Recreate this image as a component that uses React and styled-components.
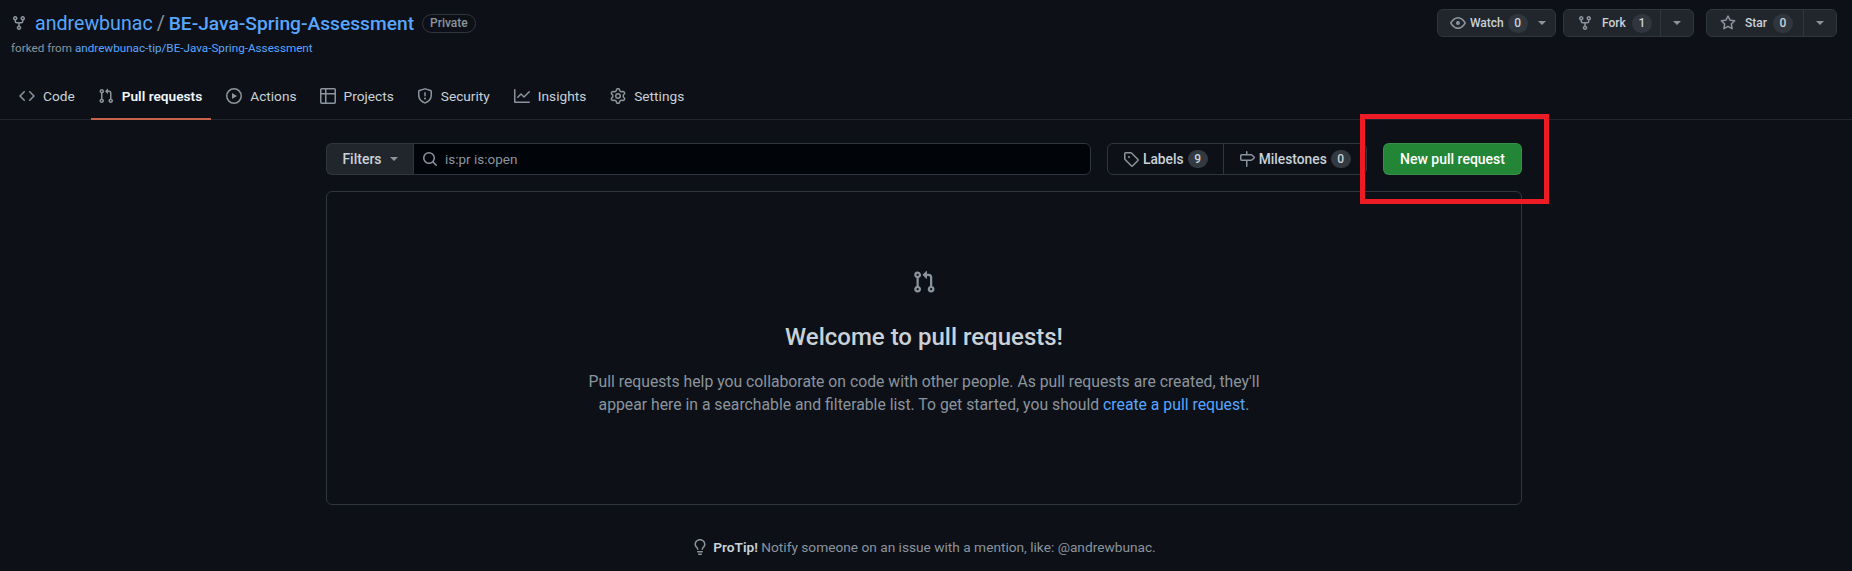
import React from 'react';
import styled, { createGlobalStyle } from 'styled-components';

const paths = {
  fork: 'M5 5.372v.878c0 .414.336.75.75.75h4.5a.75.75 0 0 0 .75-.75v-.878a2.25 2.25 0 1 1 1.5 0v.878a2.25 2.25 0 0 1-2.25 2.25h-1.5v2.128a2.251 2.251 0 1 1-1.5 0V8.5h-1.5A2.25 2.25 0 0 1 3.5 6.25v-.878a2.25 2.25 0 1 1 1.5 0ZM5 3.25a.75.75 0 1 0-1.5 0 .75.75 0 0 0 1.5 0Zm6.75.75a.75.75 0 1 0 0-1.5.75.75 0 0 0 0 1.5Zm-3 8.75a.75.75 0 1 0-1.5 0 .75.75 0 0 0 1.5 0Z',
  code: 'm11.28 3.22 4.25 4.25a.75.75 0 0 1 0 1.06l-4.25 4.25a.749.749 0 0 1-1.275-.326.749.749 0 0 1 .215-.734L13.94 8l-3.72-3.72a.749.749 0 0 1 .326-1.275.749.749 0 0 1 .734.215Zm-6.56 0a.751.751 0 0 1 1.042.018.751.751 0 0 1 .018 1.042L2.06 8l3.72 3.72a.749.749 0 0 1-.326 1.275.749.749 0 0 1-.734-.215L.47 8.53a.75.75 0 0 1 0-1.06Z',
  pr: 'M1.5 3.25a2.25 2.25 0 1 1 3 2.122v5.256a2.251 2.251 0 1 1-1.5 0V5.372A2.25 2.25 0 0 1 1.5 3.25Zm5.677-.177L9.573.677A.25.25 0 0 1 10 .854V2.5h1A2.5 2.5 0 0 1 13.5 5v5.628a2.251 2.251 0 1 1-1.5 0V5a1 1 0 0 0-1-1h-1v1.646a.25.25 0 0 1-.427.177L7.177 3.427a.25.25 0 0 1 0-.354ZM3.75 2.5a.75.75 0 1 0 0 1.5.75.75 0 0 0 0-1.5Zm0 9.5a.75.75 0 1 0 0 1.5.75.75 0 0 0 0-1.5Zm8.25.75a.75.75 0 1 0 1.5 0 .75.75 0 0 0-1.5 0Z',
  play: 'M8 0a8 8 0 1 1 0 16A8 8 0 0 1 8 0ZM1.5 8a6.5 6.5 0 1 0 13 0 6.5 6.5 0 0 0-13 0Zm4.879-2.773 4.264 2.559a.25.25 0 0 1 0 .428l-4.264 2.559A.25.25 0 0 1 6 10.559V5.442a.25.25 0 0 1 .379-.215Z',
  table: 'M0 1.75C0 .784.784 0 1.75 0h12.5C15.216 0 16 .784 16 1.75v12.5A1.75 1.75 0 0 1 14.25 16H1.75A1.75 1.75 0 0 1 0 14.25ZM6.5 6.5v8h7.75a.25.25 0 0 0 .25-.25V6.5Zm8-1.5V1.75a.25.25 0 0 0-.25-.25H6.5V5Zm-13 1.5v7.75c0 .138.112.25.25.25H5v-8ZM5 5V1.5H1.75a.25.25 0 0 0-.25.25V5Z',
  shield: 'M7.467.133a1.748 1.748 0 0 1 1.066 0l5.25 1.68A1.75 1.75 0 0 1 15 3.48V7c0 1.566-.32 3.182-1.303 4.682-.983 1.498-2.585 2.813-5.032 3.855a1.697 1.697 0 0 1-1.33 0c-2.447-1.042-4.049-2.357-5.032-3.855C1.32 10.182 1 8.566 1 7V3.48a1.75 1.75 0 0 1 1.217-1.667Zm.61 1.429a.25.25 0 0 0-.153 0l-5.25 1.68a.25.25 0 0 0-.174.238V7c0 1.358.275 2.666 1.057 3.86.784 1.194 2.121 2.34 4.366 3.297a.196.196 0 0 0 .154 0c2.245-.956 3.582-2.104 4.366-3.298C13.225 9.666 13.5 8.36 13.5 7V3.48a.251.251 0 0 0-.174-.237l-5.25-1.68ZM8.75 4.75v3a.75.75 0 0 1-1.5 0v-3a.75.75 0 0 1 1.5 0ZM9 10.5a1 1 0 1 1-2 0 1 1 0 0 1 2 0Z',
  graph: 'M1.5 1.75V13.5h13.75a.75.75 0 0 1 0 1.5H.75a.75.75 0 0 1-.75-.75V1.75a.75.75 0 0 1 1.5 0Zm14.28 2.53-5.25 5.25a.75.75 0 0 1-1.06 0L7 7.06 4.28 9.78a.751.751 0 0 1-1.042-.018.751.751 0 0 1-.018-1.042l3.25-3.25a.75.75 0 0 1 1.06 0L10 7.94l4.72-4.72a.751.751 0 0 1 1.042.018.751.751 0 0 1 .018 1.042Z',
  gear: 'M8 0a8.2 8.2 0 0 1 .701.031C9.444.095 9.99.645 10.16 1.29l.288 1.107c.018.066.079.158.212.224.231.114.454.243.668.386.123.082.233.09.299.071l1.103-.303c.644-.176 1.392.021 1.82.63.27.385.506.792.704 1.218.315.675.111 1.422-.364 1.891l-.814.806c-.049.048-.098.147-.088.294.016.257.016.515 0 .772-.01.147.038.246.088.294l.814.806c.475.469.679 1.216.364 1.891a7.977 7.977 0 0 1-.704 1.217c-.428.61-1.176.807-1.82.63l-1.102-.302c-.067-.019-.177-.011-.3.071a5.909 5.909 0 0 1-.668.386c-.133.066-.194.158-.211.224l-.29 1.106c-.168.646-.715 1.196-1.458 1.26a8.006 8.006 0 0 1-1.402 0c-.743-.064-1.289-.614-1.458-1.26l-.289-1.106c-.018-.066-.079-.158-.212-.224a5.738 5.738 0 0 1-.668-.386c-.123-.082-.233-.09-.299-.071l-1.103.303c-.644.176-1.392-.021-1.82-.63a8.12 8.12 0 0 1-.704-1.218c-.315-.675-.111-1.422.363-1.891l.815-.806c.05-.048.098-.147.088-.294a6.214 6.214 0 0 1 0-.772c.01-.147-.038-.246-.088-.294l-.815-.806C.635 6.045.431 5.298.746 4.623a7.92 7.92 0 0 1 .704-1.217c.428-.61 1.176-.807 1.82-.63l1.102.302c.067.019.177.011.3-.071.214-.143.437-.272.668-.386.133-.066.194-.158.211-.224l.29-1.106C6.009.645 6.556.095 7.299.03 7.53.01 7.764 0 8 0Zm-.571 1.525c-.036.003-.108.036-.137.146l-.289 1.105c-.147.561-.549.967-.998 1.189-.173.086-.34.183-.5.29-.417.278-.97.423-1.529.27l-1.103-.303c-.109-.03-.175.016-.195.045-.22.312-.412.644-.573.99-.014.031-.021.11.059.19l.815.806c.411.406.562.957.53 1.456a4.709 4.709 0 0 0 0 .582c.032.499-.119 1.05-.53 1.456l-.815.806c-.081.08-.073.159-.059.19.162.346.353.677.573.989.02.03.085.076.195.046l1.102-.303c.56-.153 1.113-.008 1.53.27.161.107.328.204.501.29.447.222.85.629.997 1.189l.289 1.105c.029.109.101.143.137.146a6.6 6.6 0 0 0 1.142 0c.036-.003.108-.036.137-.146l.289-1.105c.147-.561.549-.967.998-1.189.173-.086.34-.183.5-.29.417-.278.97-.423 1.529-.27l1.103.303c.109.029.175-.016.195-.045.22-.313.411-.644.573-.99.014-.031.021-.11-.059-.19l-.815-.806c-.411-.406-.562-.957-.53-1.456a4.709 4.709 0 0 0 0-.582c-.032-.499.119-1.05.53-1.456l.815-.806c.081-.08.073-.159.059-.19a6.464 6.464 0 0 0-.573-.989c-.02-.03-.085-.076-.195-.046l-1.102.303c-.56.153-1.113.008-1.53-.27a4.44 4.44 0 0 0-.501-.29c-.447-.222-.85-.629-.997-1.189l-.289-1.105c-.029-.11-.101-.143-.137-.146a6.6 6.6 0 0 0-1.142 0ZM11 8a3 3 0 1 1-6 0 3 3 0 0 1 6 0ZM9.5 8a1.5 1.5 0 1 0-3.001.001A1.5 1.5 0 0 0 9.5 8Z',
  eye: 'M8 2c1.981 0 3.671.992 4.933 2.078 1.27 1.091 2.187 2.345 2.637 3.023a1.62 1.62 0 0 1 0 1.798c-.45.678-1.367 1.932-2.637 3.023C11.67 13.008 9.981 14 8 14c-1.981 0-3.671-.992-4.933-2.078C1.797 10.83.88 9.576.43 8.898a1.62 1.62 0 0 1 0-1.798c.45-.677 1.367-1.931 2.637-3.022C4.33 2.992 6.019 2 8 2ZM1.679 7.932a.12.12 0 0 0 0 .136c.411.622 1.241 1.75 2.366 2.717C5.176 11.758 6.527 12.5 8 12.5c1.473 0 2.825-.742 3.955-1.715 1.124-.967 1.954-2.096 2.366-2.717a.12.12 0 0 0 0-.136c-.412-.621-1.242-1.75-2.366-2.717C10.824 4.242 9.473 3.5 8 3.5c-1.473 0-2.825.742-3.955 1.715-1.124.967-1.954 2.096-2.366 2.717ZM8 10a2 2 0 1 1-.001-3.999A2 2 0 0 1 8 10Z',
  star: 'M8 .25a.75.75 0 0 1 .673.418l1.882 3.815 4.21.612a.75.75 0 0 1 .416 1.279l-3.046 2.97.719 4.192a.751.751 0 0 1-1.088.791L8 12.347l-3.766 1.98a.75.75 0 0 1-1.088-.79l.72-4.194L.818 6.374a.75.75 0 0 1 .416-1.28l4.21-.611L7.327.668A.75.75 0 0 1 8 .25Zm0 2.445L6.615 5.5a.75.75 0 0 1-.564.41l-3.097.45 2.24 2.184a.75.75 0 0 1 .216.664l-.528 3.084 2.769-1.456a.75.75 0 0 1 .698 0l2.77 1.456-.53-3.084a.75.75 0 0 1 .216-.664l2.24-2.183-3.096-.45a.75.75 0 0 1-.564-.41L8 2.694Z',
  search: 'M10.68 11.74a6 6 0 0 1-7.922-8.982 6 6 0 0 1 8.982 7.922l3.04 3.04a.749.749 0 0 1-.326 1.275.749.749 0 0 1-.734-.215ZM11.5 7a4.499 4.499 0 1 0-8.997 0A4.499 4.499 0 0 0 11.5 7Z',
  tag: 'M1 7.775V2.75C1 1.784 1.784 1 2.75 1h5.025c.464 0 .91.184 1.238.513l6.25 6.25a1.75 1.75 0 0 1 0 2.474l-5.026 5.026a1.75 1.75 0 0 1-2.474 0l-6.25-6.25A1.752 1.752 0 0 1 1 7.775Zm1.5 0c0 .066.026.13.073.177l6.25 6.25a.25.25 0 0 0 .354 0l5.025-5.025a.25.25 0 0 0 0-.354l-6.25-6.25a.25.25 0 0 0-.177-.073H2.75a.25.25 0 0 0-.25.25ZM6 5a1 1 0 1 1 0 2 1 1 0 0 1 0-2Z',
  milestone: 'M7.75 0a.75.75 0 0 1 .75.75V3h3.634c.414 0 .814.147 1.13.414l2.07 1.75a1.75 1.75 0 0 1 0 2.672l-2.07 1.75a1.75 1.75 0 0 1-1.13.414H8.5v5.25a.75.75 0 0 1-1.5 0V10H2.75A1.75 1.75 0 0 1 1 8.25v-3.5C1 3.784 1.784 3 2.75 3H7V.75A.75.75 0 0 1 7.75 0Zm4.384 8.5a.25.25 0 0 0 .161-.06l2.07-1.75a.248.248 0 0 0 0-.38l-2.07-1.75a.25.25 0 0 0-.161-.06H2.75a.25.25 0 0 0-.25.25v3.5c0 .138.112.25.25.25h9.384Z',
  bulb: 'M8 1.5c-2.363 0-4 1.69-4 3.75 0 .984.424 1.625.984 2.304l.214.253c.223.264.47.556.673.848.284.411.537.896.621 1.49a.75.75 0 0 1-1.484.211c-.04-.282-.163-.547-.37-.847a8.456 8.456 0 0 0-.542-.68c-.084-.1-.173-.205-.268-.32C3.201 7.75 2.5 6.766 2.5 5.25 2.5 2.31 4.863 0 8 0s5.5 2.31 5.5 5.25c0 1.516-.701 2.5-1.328 3.259-.095.115-.184.22-.268.319-.207.245-.383.453-.541.681-.208.3-.33.565-.37.847a.751.751 0 0 1-1.485-.212c.084-.593.337-1.078.621-1.489.203-.292.45-.584.673-.848.075-.088.147-.173.213-.253.561-.679.985-1.32.985-2.304 0-2.06-1.637-3.75-4-3.75ZM5.75 12h4.5a.75.75 0 0 1 0 1.5h-4.5a.75.75 0 0 1 0-1.5ZM6 15.25a.75.75 0 0 1 .75-.75h2.5a.75.75 0 0 1 0 1.5h-2.5a.75.75 0 0 1-.75-.75Z',
};

const GlobalStyle = createGlobalStyle`
  html, body {
    margin: 0;
    background: #0d1117;
    color: #c9d1d9;
    font-family: Roboto, "Liberation Sans", sans-serif;
  }
`;

const Svg = styled.svg`
  display: block;
  flex: none;
  fill: ${({ $color }) => $color || '#8b949e'};
`;

function Icon({ name, size = 16, color }) {
  return (
    <Svg viewBox="0 0 16 16" width={size} height={size} $color={color}>
      <path d={paths[name]} />
    </Svg>
  );
}

const Page = styled.div`
  position: relative;
  width: 1852px;
  height: 571px;
  overflow: hidden;
`;

const Header = styled.header`
  height: 120px;
  box-sizing: border-box;
  border-bottom: 1px solid #21262d;
`;

const RepoBar = styled.div`
  display: flex;
  justify-content: space-between;
  align-items: flex-start;
  height: 73px;
  padding: 9px 15px 0 11px;
  box-sizing: border-box;
`;

const TitleRow = styled.div`
  display: flex;
  align-items: center;
  height: 28px;
  font-size: 19.6px;
`;

const Owner = styled.a`
  margin-left: 8px;
  color: #58a6ff;
`;

const Slash = styled.span`
  margin: 0 4px;
  color: #8b949e;
`;

const RepoName = styled.a`
  color: #58a6ff;
  font-size: 19.2px;
  font-weight: 500;
`;

const Badge = styled.span`
  margin-left: 8px;
  padding: 0 7px;
  height: 19px;
  line-height: 17px;
  box-sizing: border-box;
  font-size: 12px;
  font-weight: 500;
  color: #8b949e;
  border: 1px solid #30363d;
  border-radius: 10px;
`;

const Forked = styled.div`
  margin-top: 2px;
  font-size: 11.7px;
  line-height: 18px;
  color: #8b949e;
`;

const Link = styled.a`
  color: #58a6ff;
`;

const Actions = styled.div`
  display: flex;
  gap: 7px;
`;

const ActionGroup = styled.div`
  display: flex;
  width: ${({ $width }) => $width}px;
  height: 28px;
  box-sizing: border-box;
  background: #21262d;
  border: 1px solid #30363d;
  border-radius: 6px;
  margin-left: ${({ $gap }) => $gap || 0}px;
`;

const ActionMain = styled.div`
  flex: 1;
  display: flex;
  align-items: center;
  padding-left: ${({ $pad }) => $pad}px;
  gap: ${({ $gap }) => $gap}px;
  font-size: 12px;
  font-weight: 500;
  color: #c9d1d9;
`;

const ActionLabel = styled.span`
  margin-left: ${({ $offset }) => $offset}px;
`;

const ActionCaret = styled.div`
  width: 32px;
  display: flex;
  align-items: center;
  justify-content: center;
  border-left: 1px solid #30363d;
`;

const Caret = styled.span`
  display: block;
  width: 0;
  height: 0;
  margin-left: ${({ $left }) => $left || 0}px;
  border-left: 4px solid transparent;
  border-right: 4px solid transparent;
  border-top: 4px solid ${({ $color }) => $color || '#8b949e'};
`;

const Counter = styled.span`
  display: inline-block;
  min-width: 20px;
  height: ${({ $dark }) => ($dark ? 18 : 19)}px;
  line-height: ${({ $dark }) => ($dark ? 18 : 19)}px;
  text-align: center;
  font-size: 12px;
  font-weight: 500;
  color: #c9d1d9;
  background: ${({ $dark }) => ($dark ? 'rgba(110,118,129,0.4)' : '#30363d')};
  border-radius: 10px;
`;

const Nav = styled.nav`
  display: flex;
  height: 47px;
  padding-left: 8px;
  box-sizing: border-box;
`;

const Tab = styled.a`
  display: flex;
  align-items: center;
  gap: 8px;
  height: 47px;
  padding: 0 9px 0 ${({ $left }) => $left || 9}px;
  margin-right: ${({ $gap }) => $gap}px;
  box-sizing: border-box;
  font-size: 13.7px;
  font-weight: ${({ $active }) => ($active ? 600 : 400)};
  color: ${({ $active }) => ($active ? '#f0f6fc' : '#c9d1d9')};
  border-bottom: 2px solid ${({ $active }) => ($active ? '#c9624c' : 'transparent')};
`;

const Main = styled.main`
  width: 1196px;
  margin-left: 326px;
`;

const Toolbar = styled.div`
  display: flex;
  height: 32px;
  margin-top: 23px;
`;

const FilterButton = styled.div`
  display: flex;
  align-items: center;
  justify-content: center;
  gap: 8px;
  width: 87px;
  box-sizing: border-box;
  font-size: 14px;
  font-weight: 500;
  color: #c9d1d9;
  background: #21262d;
  border: 1px solid #30363d;
  border-right: 0;
  border-radius: 6px 0 0 6px;
`;

const SearchBox = styled.div`
  display: flex;
  align-items: center;
  gap: 7px;
  width: 678px;
  padding-left: 8px;
  box-sizing: border-box;
  font-size: 13.5px;
  color: #8b949e;
  background: #010409;
  border: 1px solid #30363d;
  border-radius: 0 6px 6px 0;
`;

const LinkGroup = styled.div`
  display: flex;
  width: 260px;
  margin-left: 16px;
  box-sizing: border-box;
  border: 1px solid #30363d;
  border-radius: 6px;
`;

const LinkItem = styled.div`
  display: flex;
  align-items: center;
  justify-content: center;
  gap: ${({ $gap }) => $gap}px;
  width: ${({ $width }) => $width}px;
  box-sizing: border-box;
  font-size: 13.8px;
  font-weight: 500;
  color: #c9d1d9;
  border-left: ${({ $divider }) => ($divider ? '1px solid #30363d' : '0')};
`;

const NewButton = styled.div`
  display: flex;
  align-items: center;
  justify-content: center;
  width: 139px;
  margin-left: 16px;
  font-size: 14px;
  font-weight: 500;
  color: #fff;
  background: #238636;
  border: 1px solid rgba(240, 246, 252, 0.1);
  box-sizing: border-box;
  border-radius: 6px;
`;

const Blank = styled.section`
  display: flex;
  flex-direction: column;
  align-items: center;
  height: 314px;
  margin-top: 16px;
  padding-top: 78px;
  box-sizing: border-box;
  border: 1px solid #30363d;
  border-radius: 6px;
`;

const Welcome = styled.h3`
  margin: 25px 0 0;
  font-size: 24px;
  line-height: 36px;
  font-weight: 500;
  color: #c9d1d9;
`;

const Lead = styled.p`
  width: 700px;
  margin: 15px 0 0;
  font-size: 15.75px;
  line-height: 23px;
  text-align: center;
  color: #8b949e;
`;

const Tip = styled.p`
  display: flex;
  align-items: center;
  justify-content: center;
  gap: 5px;
  margin: 34px 0 0;
  font-size: 13.7px;
  line-height: 16px;
  color: #8b949e;

  strong {
    font-weight: 600;
    color: #c9d1d9;
  }
`;

/* annotation drawn over the screenshot */
const Highlight = styled.div`
  position: absolute;
  left: 1360px;
  top: 114px;
  width: 189px;
  height: 90px;
  box-sizing: border-box;
  border: 5px solid #ed1c24;
`;

const tabs = [
  { icon: 'code', label: 'Code', gap: 7, left: 11 },
  { icon: 'pr', label: 'Pull requests', active: true, gap: 6, left: 7 },
  { icon: 'play', label: 'Actions', gap: 5 },
  { icon: 'table', label: 'Projects', gap: 5 },
  { icon: 'shield', label: 'Security', gap: 6 },
  { icon: 'graph', label: 'Insights', gap: 6 },
  { icon: 'gear', label: 'Settings', gap: 0 },
];

function App() {
  return (
    <Page>
      <GlobalStyle />
      <Header>
        <RepoBar>
          <div>
            <TitleRow>
              <Icon name="fork" size={16} />
              <Owner>andrewbunac</Owner>
              <Slash>/</Slash>
              <RepoName>BE-Java-Spring-Assessment</RepoName>
              <Badge>Private</Badge>
            </TitleRow>
            <Forked>
              forked from <Link>andrewbunac-tip/BE-Java-Spring-Assessment</Link>
            </Forked>
          </div>
          <Actions>
            <ActionGroup $width={119}>
              <ActionMain $pad={12} $gap={4}>
                <Icon name="eye" />
                <ActionLabel $offset={0}>Watch</ActionLabel>
                <Counter>0</Counter>
                <Caret $left={6} />
              </ActionMain>
            </ActionGroup>
            <ActionGroup $width={131}>
              <ActionMain $pad={13} $gap={6}>
                <Icon name="fork" />
                <ActionLabel $offset={3}>Fork</ActionLabel>
                <Counter>1</Counter>
              </ActionMain>
              <ActionCaret><Caret /></ActionCaret>
            </ActionGroup>
            <ActionGroup $width={131} $gap={5}>
              <ActionMain $pad={13} $gap={6}>
                <Icon name="star" />
                <ActionLabel $offset={3}>Star</ActionLabel>
                <Counter>0</Counter>
              </ActionMain>
              <ActionCaret><Caret /></ActionCaret>
            </ActionGroup>
          </Actions>
        </RepoBar>
        <Nav>
          {tabs.map((t) => (
            <Tab key={t.label} $active={t.active} $gap={t.gap} $left={t.left}>
              <Icon name={t.icon} />
              {t.label}
            </Tab>
          ))}
        </Nav>
      </Header>
      <Main>
        <Toolbar>
          <FilterButton>
            Filters <Caret />
          </FilterButton>
          <SearchBox>
            <Icon name="search" />
            is:pr is:open
          </SearchBox>
          <LinkGroup>
            <LinkItem $width={115} $gap={4}>
              <Icon name="tag" />
              Labels
              <Counter $dark>9</Counter>
            </LinkItem>
            <LinkItem $width={144} $gap={4} $divider>
              <Icon name="milestone" />
              Milestones
              <Counter $dark>0</Counter>
            </LinkItem>
          </LinkGroup>
          <NewButton>New pull request</NewButton>
        </Toolbar>
        <Blank>
          <Icon name="pr" size={24} />
          <Welcome>Welcome to pull requests!</Welcome>
          <Lead>
            Pull requests help you collaborate on code with other people. As pull requests are created, they'll
            appear here in a searchable and filterable list. To get started, you should <Link>create a pull request</Link>.
          </Lead>
        </Blank>
        <Tip>
          <Icon name="bulb" />
          <span><strong>ProTip!</strong> Notify someone on an issue with a mention, like: @andrewbunac.</span>
        </Tip>
      </Main>
      <Highlight />
    </Page>
  );
}

export default App;
